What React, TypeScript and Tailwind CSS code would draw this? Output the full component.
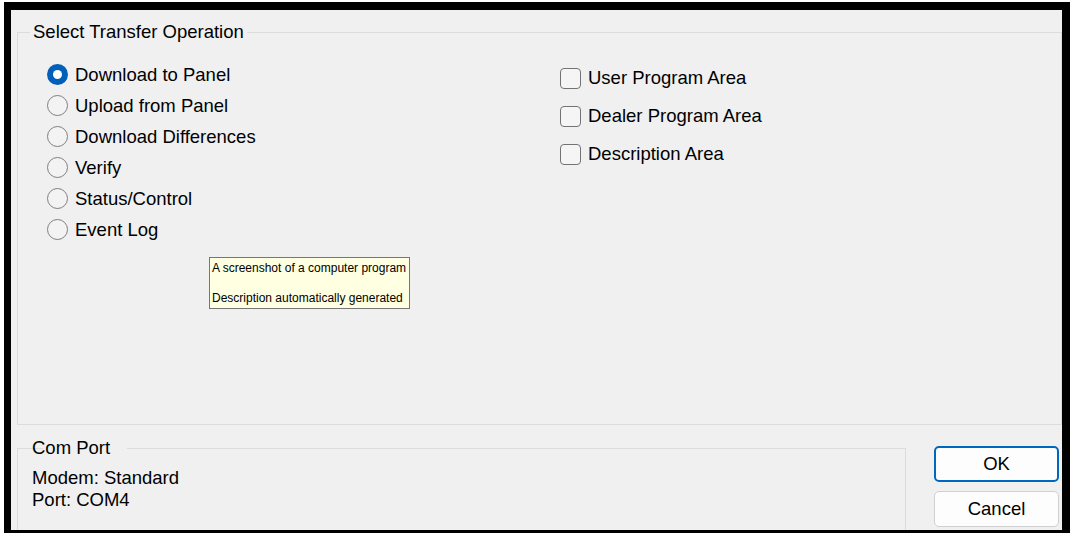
import React from "react";

const F = { fontFamily: '"Liberation Sans", Arial, sans-serif' };

function Radio({ label, checked }: { label: string; checked?: boolean }) {
  return (
    <div className="flex items-center h-[31px] gap-[7px]">
      {checked ? (
        <span className="w-[21px] h-[21px] rounded-full bg-[#005fb8] flex items-center justify-center shrink-0">
          <span className="w-[9px] h-[9px] rounded-full bg-white" />
        </span>
      ) : (
        <span className="w-[21px] h-[21px] rounded-full border border-[#7f7f7f] bg-[#f3f3f3] shrink-0" />
      )}
      <span className="text-[18.5px] leading-[22px] text-black">{label}</span>
    </div>
  );
}

function Check({ label }: { label: string }) {
  return (
    <div className="flex items-center h-[38px] gap-[7px]">
      <span className="w-[21px] h-[21px] rounded-[4px] border border-[#737373] bg-[#f5f5f5] shrink-0" />
      <span className="text-[18.5px] leading-[22px] text-black">{label}</span>
    </div>
  );
}

export default function App() {
  return (
    <div className="w-[1081px] h-[541px] bg-white pt-[2px] pl-[4px] overflow-hidden" style={F}>
      <div className="relative w-[1066px] h-[531px] bg-[#f0f0f0] border-black border-t-[8px] border-l-[7px] border-r-[8px] border-b-[3px] overflow-hidden pt-[11px]">
        <fieldset className="ml-[6px] w-[1045px] h-[404px] border border-[#dcdcdc]">
          <legend className="ml-[12px] px-[3px] text-[18.5px] leading-[22px] text-black">
            Select Transfer Operation
          </legend>
          <div className="grid grid-cols-[513px_1fr] mt-[16px] pl-[29px]">
            <div className="flex flex-col">
              <Radio label="Download to Panel" checked />
              <Radio label="Upload from Panel" />
              <Radio label="Download Differences" />
              <Radio label="Verify" />
              <Radio label="Status/Control" />
              <Radio label="Event Log" />
            </div>
            <div className="flex flex-col">
              <Check label="User Program Area" />
              <Check label="Dealer Program Area" />
              <Check label="Description Area" />
            </div>
          </div>
        </fieldset>

        <div className="flex mt-[12px]">
          <fieldset className="ml-[6px] w-[889px] h-[110px] border border-[#dcdcdc] pl-[14px]">
            <legend className="ml-[11px] px-[3px] text-[18.5px] leading-[22px] text-black -translate-x-[14px]">
              Com Port
            </legend>
            <div className="mt-[8px] text-[18.5px] leading-[22px] text-black">
              <div>Modem: Standard</div>
              <div>Port: COM4</div>
            </div>
          </fieldset>
          <div className="ml-[28px] mt-[9px] flex flex-col gap-[9px]">
            <button className="w-[125px] h-[36px] rounded-[5px] border-2 border-[#0067c0] bg-[#fdfdfd] text-[18.5px] text-black">
              OK
            </button>
            <button className="w-[125px] h-[36px] rounded-[5px] border border-[#d0d0d0] bg-[#fdfdfd] text-[18.5px] text-black">
              Cancel
            </button>
          </div>
        </div>

        <div className="absolute left-[198px] top-[247px] w-[201px] h-[52px] bg-[#ffffe1] border border-[#767676] pl-[2px] pt-[3px] text-[12px] leading-[15px] text-black whitespace-nowrap overflow-hidden">
          <div>A screenshot of a computer program</div>
          <div>&nbsp;</div>
          <div>Description automatically generated</div>
        </div>
      </div>
    </div>
  );
}
